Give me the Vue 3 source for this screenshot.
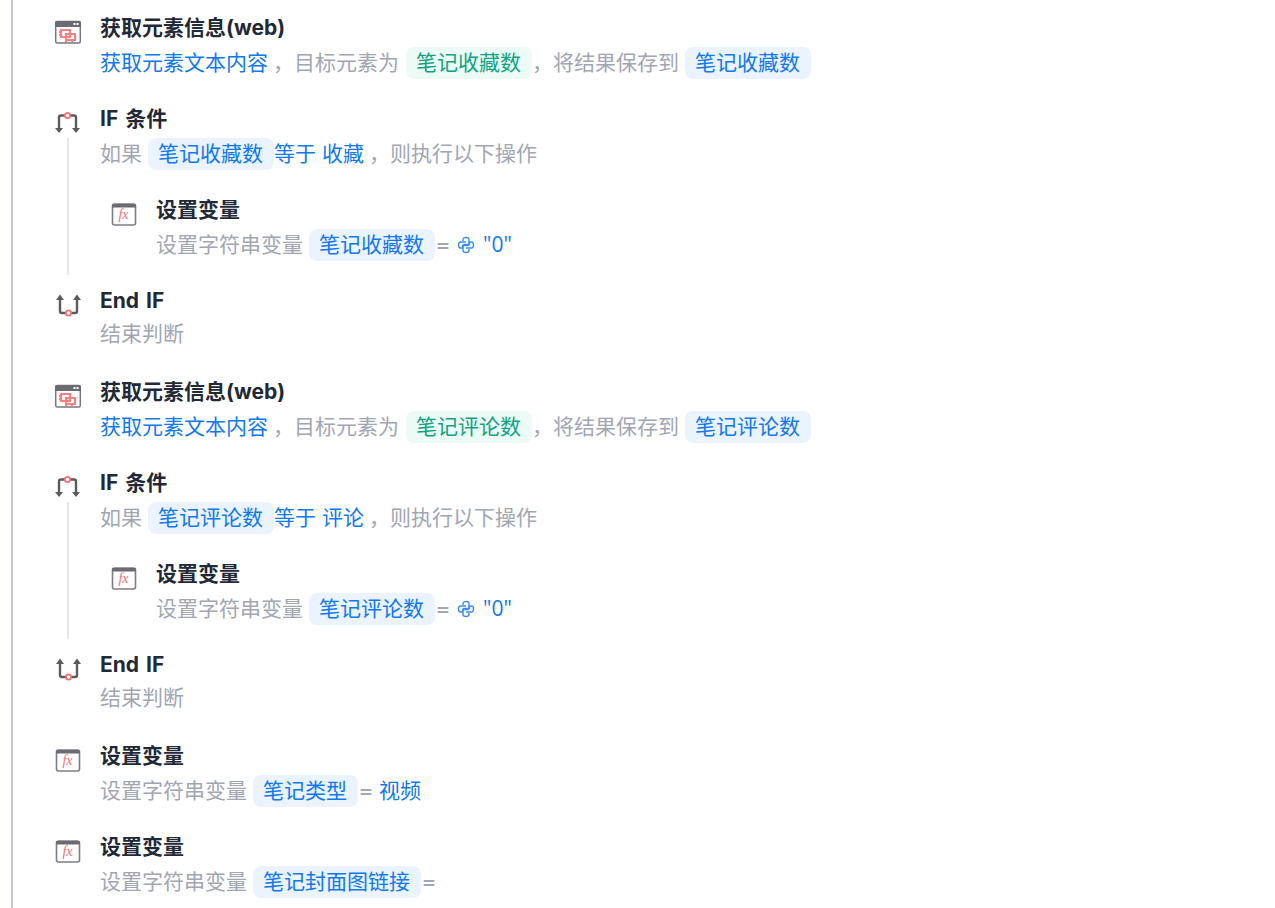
<template>
  <div class="page">
    <div class="flow">
      <div v-for="(item, i) in rows" :key="i" class="row" :class="{ nested: item.nested }">
        <div v-if="item.line" class="branch-line"></div>
        <div class="icon-cell">
          <svg v-if="item.icon === 'web'" width="28" height="26" viewBox="0 0 28 26">
            <rect x="1.700" y="2.500" width="24.600" height="21.500" rx="1.500" fill="#fff" stroke="#77777f" stroke-width="1.500" />
            <path d="M1 4a2 2 0 0 1 2-2h22a2 2 0 0 1 2 2v4H1z" fill="#6b6b73" />
            <rect x="19.500" y="4" width="2" height="2" fill="#fff" />
            <rect x="22.500" y="4" width="2" height="2" fill="#fff" />
            <g fill="none" stroke="#f98080" stroke-width="2.200">
              <path d="M7 11h9v7H7zM5 13h3M5 16h3" />
              <path d="M12 15h9v6h-9zM16 13v2M12 22v1M18 21v2" />
            </g>
          </svg>
          <svg v-else-if="item.icon === 'if'" width="28" height="26" viewBox="0 0 28 26">
            <path d="M5 18V7.500a2 2 0 0 1 2-2h4M16 5.500h4a2 2 0 0 1 2 2V18" fill="none" stroke="#5b5b5f" stroke-width="2.400" />
            <path d="M1 18h8l-4 5zM18 18h8l-4 5z" fill="#5b5b5f" />
            <circle cx="13.500" cy="5.500" r="2.600" fill="#fff" stroke="#f87171" stroke-width="1.800" />
          </svg>
          <svg v-else-if="item.icon === 'end'" width="28" height="26" viewBox="0 0 28 26">
            <path d="M6 8v11a2 2 0 0 0 2 2h4M17 21h4a2 2 0 0 0 2-2V8" fill="none" stroke="#5b5b5f" stroke-width="2.400" />
            <path d="M2 8h8L6 2.500zM19 8h8l-4-5.500z" fill="#5b5b5f" />
            <circle cx="14.500" cy="21" r="2.600" fill="#fff" stroke="#f87171" stroke-width="1.800" />
          </svg>
          <svg v-else width="28" height="26" viewBox="0 0 28 26">
            <rect x="2.500" y="3" width="23" height="21" rx="2" fill="#fff" stroke="#7d7d86" stroke-width="1.600" />
            <path d="M2 5a2 2 0 0 1 2-2h20a2 2 0 0 1 2 2v1.500H2z" fill="#6b6b73" />
            <text x="13.500" y="18" text-anchor="middle" class="fx">fx</text>
          </svg>
        </div>
        <div class="body">
          <div class="title">{{ item.title }}</div>
          <div class="desc">
            <template v-for="(part, j) in item.parts" :key="j">
              <span v-if="part.k === 'tag'" class="tag">{{ part.t }}</span>
              <span v-else-if="part.k === 'ok'" class="tag green">{{ part.t }}</span>
              <span v-else-if="part.k === 'val'" class="val">{{ part.t }}</span>
              <span v-else-if="part.k === 'str'" class="val str">{{ part.t }}</span>
              <span v-else-if="part.k === 'eq'" class="eq">=</span>
              <svg v-else-if="part.k === 'py'" class="py" width="18" height="18" viewBox="0 0 18 18">
                <path d="M6 5V3.500Q6 1.500 9 1.500T12 3.500V7Q12 8.500 10.500 8.500H7.500Q5.500 8.500 5.500 10.500V12H3.500Q1.500 12 1.500 9T3.500 6H9" fill="none" stroke="#3b8cf5" stroke-width="1.400" />
                <path d="M12 13V14.500Q12 16.500 9 16.500T6 14.500V11Q6 9.500 7.500 9.500H10.500Q12.500 9.500 12.500 7.500V6H14.500Q16.500 6 16.500 9T14.500 12H9" fill="none" stroke="#3b8cf5" stroke-width="1.400" />
              </svg>
              <span v-else class="plain">{{ part.t }}</span>
            </template>
          </div>
        </div>
      </div>
    </div>
  </div>
</template>

<script setup>
const getInfo = (name) => ({
  icon: 'web',
  title: '获取元素信息(web)',
  parts: [
    { k: 'val', t: '获取元素文本内容' },
    { t: '，目标元素为' },
    { k: 'ok', t: name },
    { t: '，将结果保存到' },
    { k: 'tag', t: name }
  ]
})

const ifBlock = (name, word) => [
  getInfo(name),
  {
    icon: 'if',
    title: 'IF 条件',
    line: true,
    parts: [
      { t: '如果' },
      { k: 'tag', t: name },
      { k: 'val', t: '等于 ' + word },
      { t: '，则执行以下操作' }
    ]
  },
  {
    icon: 'fx',
    nested: true,
    title: '设置变量',
    parts: [
      { t: '设置字符串变量' },
      { k: 'tag', t: name },
      { k: 'eq' },
      { k: 'py' },
      { k: 'str', t: '"0"' }
    ]
  },
  { icon: 'end', title: 'End IF', parts: [{ t: '结束判断' }] }
]

const rows = [
  ...ifBlock('笔记收藏数', '收藏'),
  ...ifBlock('笔记评论数', '评论'),
  {
    icon: 'fx',
    title: '设置变量',
    parts: [
      { t: '设置字符串变量' },
      { k: 'tag', t: '笔记类型' },
      { k: 'eq' },
      { k: 'val', t: '视频' }
    ]
  },
  {
    icon: 'fx',
    title: '设置变量',
    parts: [
      { t: '设置字符串变量' },
      { k: 'tag', t: '笔记封面图链接' },
      { k: 'eq' }
    ]
  }
]
</script>

<style scoped>
.page {
  height: 908px;
  margin-left: 11px;
  border-left: 2px solid #c3c6cc;
  overflow: hidden;
  font-family: Inter, "Noto Sans CJK SC", sans-serif;
  font-size: 21px;
}

.flow {
  padding: 13px 0 0 41px;
}

.row {
  position: relative;
  display: flex;
  height: 91px;
  gap: 18px;
}

.row.nested {
  margin-left: 56px;
}

.branch-line {
  position: absolute;
  left: 13px;
  top: 34px;
  width: 2px;
  height: 137px;
  background: #e5e7eb;
}

.icon-cell {
  width: 28px;
  height: 26px;
  margin-top: 6px;
  flex-shrink: 0;
}

.fx {
  font-family: "Liberation Serif", serif;
  font-style: italic;
  font-size: 14px;
  fill: #f87171;
}

.title {
  height: 30px;
  line-height: 30px;
  font-weight: 700;
  word-spacing: 2px;
  color: #1f2937;
}

.desc {
  margin-top: 4px;
  line-height: 28px;
  color: #a1a6b4;
  white-space: pre;
}

.plain {
  color: #a1a6b4;
}

.val {
  margin-right: 5px;
  color: #0f78f2;
}

.val.str {
  font-family: "Open Sans", sans-serif;
}

.tag {
  display: inline-block;
  height: 32px;
  line-height: 32px;
  margin-left: 6px;
  padding: 0 11px 0 10px;
  border-radius: 8px;
  background: #ebf3ff;
  color: #0f78f2;
}

.tag.green {
  margin-left: 7px;
  background: #ecfbf6;
  color: #10a37f;
}

.eq {
  display: inline-block;
  margin: 0 6px 0 1px;
  transform: scaleX(1.1);
  font-weight: 500;
  color: #a1a6b4;
}

.py {
  vertical-align: -2px;
  margin: 0 8px 0 1px;
}
</style>
